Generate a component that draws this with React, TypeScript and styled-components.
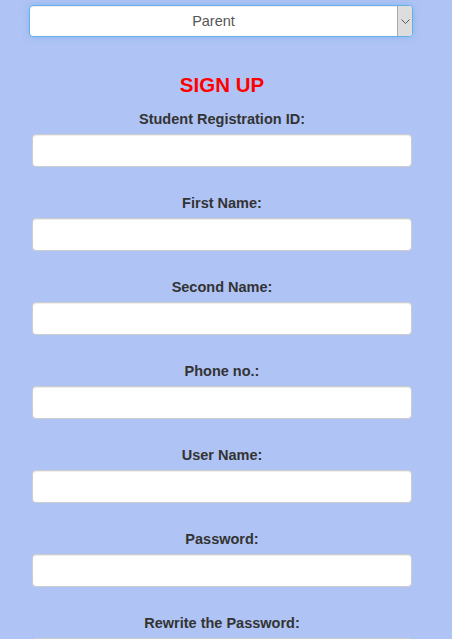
import React from "react";
import styled, { createGlobalStyle } from "styled-components";

const GlobalStyle = createGlobalStyle`
  html, body {
    margin: 0;
    padding: 0;
    background: #afc3f4;
    font-family: "Liberation Sans", Arial, sans-serif;
    overflow: hidden;
  }
  * { box-sizing: border-box; }
`;

const Page = styled.div`
  width: 444px;
  display: flex;
  flex-direction: column;
  align-items: center;
`;

const SelectBox = styled.div`
  margin-top: 5px;
  margin-left: -2px;
  width: 384px;
  height: 32px;
  display: flex;
  background: #fff;
  border: 1px solid #66afe9;
  border-radius: 4px;
  box-shadow: inset 0 1px 1px rgba(0, 0, 0, 0.075), 0 0 6px rgba(102, 175, 233, 0.6);
  overflow: hidden;
`;

const SelectValue = styled.div`
  flex: 1;
  display: flex;
  align-items: center;
  justify-content: center;
  font-size: 14.5px;
  color: #555;
`;

const SelectArrow = styled.div`
  width: 15px;
  display: flex;
  align-items: center;
  justify-content: center;
  background: #dddddd;
  border-left: 1px solid #a9a9a9;
`;

const Title = styled.h1`
  margin: 36px 0 13px;
  height: 24px;
  line-height: 24px;
  font-size: 20.5px;
  font-weight: bold;
  color: #ff0000;
  text-align: center;
`;

const Field = styled.div`
  width: 380px;
  display: flex;
  flex-direction: column;
  align-items: center;
  margin-bottom: 27px;
`;

const Label = styled.label`
  display: block;
  height: 19px;
  line-height: 19px;
  margin-bottom: 5px;
  font-size: 14.5px;
  font-weight: bold;
  color: #333;
  text-align: center;
`;

const Input = styled.input`
  width: 380px;
  height: 33px;
  padding: 6px 12px;
  font-family: inherit;
  font-size: 14px;
  color: #555;
  background: #fff;
  border: 1px solid #ccc;
  border-radius: 4px;
  box-shadow: inset 0 1px 1px rgba(0, 0, 0, 0.075);
  outline: none;
`;

const fields: { label: string; type: string }[] = [
  { label: "Student Registration ID:", type: "text" },
  { label: "First Name:", type: "text" },
  { label: "Second Name:", type: "text" },
  { label: "Phone no.:", type: "text" },
  { label: "User Name:", type: "text" },
  { label: "Password:", type: "password" },
  { label: "Rewrite the Password:", type: "password" },
];

export default function App() {
  return (
    <>
      <GlobalStyle />
      <Page>
        <SelectBox>
          <SelectValue>Parent</SelectValue>
          <SelectArrow>
            <svg width="9" height="5" viewBox="0 0 9 5">
              <path d="M0.5 0.5 L4.5 4.5 L8.5 0.5" fill="none" stroke="#555" strokeWidth="1" />
            </svg>
          </SelectArrow>
        </SelectBox>
        <Title>SIGN UP</Title>
        {fields.map((f, i) => (
          <Field key={i}>
            <Label htmlFor={`f${i}`}>{f.label}</Label>
            <Input id={`f${i}`} type={f.type} />
          </Field>
        ))}
      </Page>
    </>
  );
}
